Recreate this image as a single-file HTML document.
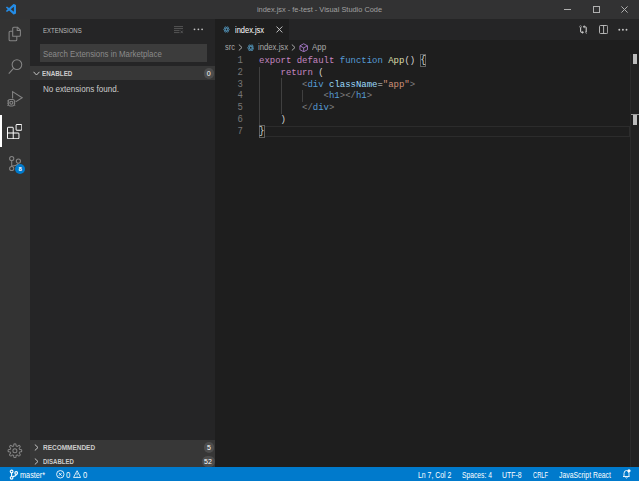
<!DOCTYPE html>
<html><head><meta charset="utf-8">
<style>
*{margin:0;padding:0;box-sizing:border-box}
html,body{width:639px;height:481px;overflow:hidden;background:#1e1e1e;font-family:"Liberation Sans",sans-serif}
.a{position:absolute}
.t{position:absolute;white-space:pre;line-height:1;transform-origin:0 0}
.ln{position:absolute;left:215px;width:28px;text-align:right;transform:scaleY(1.12);transform-origin:0 7px;color:#767676;font-family:"Liberation Mono",monospace;font-size:8.97px;line-height:11.75px}
.code{position:absolute;left:259px;color:#d4d4d4;font-family:"Liberation Mono",monospace;font-size:8.97px;line-height:11.75px;white-space:pre}
.k{color:#c586c0}.b{color:#569cd6}.f{color:#dcdcaa}.g{color:#808080}.at{color:#9cdcfe}.s{color:#ce9178}
.st{position:absolute;top:470.7px;line-height:1;font-size:8.6px;color:#fff;white-space:pre;transform-origin:0 0}
.bd{position:absolute;border-radius:5.5px;background:#4d4d4d;color:#fff;font-size:7px;line-height:11px;text-align:center;height:11px}
</style></head><body>
<!-- title bar -->
<div class="a" style="left:0;top:0;width:639px;height:19px;background:#323233"></div>
<svg class="a" style="left:5.6px;top:4.1px" width="10.5" height="10.5" viewBox="0 0 100 100">
<path fill="#248ce6" fill-rule="evenodd" d="M96.46 10.8L75.86.87a6.23 6.23 0 0 0-7.1 1.2L29.35 38.04 12.17 25a4.160 4.160 0 0 0-5.32.24L1.350 30.250a4.16 4.16 0 0 0 0 6.15L16.25 50 1.35 63.6a4.16 4.16 0 0 0 0 6.15l5.5 5a4.16 4.16 0 0 0 5.32.24l17.18-13.04 39.4 35.96a6.22 6.22 0 0 0 7.1 1.2l20.6-9.92a6.24 6.24 0 0 0 3.54-5.63V16.43a6.24 6.24 0 0 0-3.54-5.63zM75 72.7L45.1 50 75 27.3z"/>
</svg>
<div class="t" style="left:0;top:5.7px;width:639px;text-align:center;font-size:7.4px;color:#a0a0a0">index.jsx - fe-test - Visual Studio Code</div>
<div class="a" style="left:564px;top:9px;width:7px;height:1px;background:#b0b0b0"></div>
<div class="a" style="left:593px;top:6px;width:6.6px;height:6.6px;border:1px solid #b0b0b0"></div>
<svg class="a" style="left:621.2px;top:6px" width="7" height="7" viewBox="0 0 7 7"><path d="M0.4 0.4L6.6 6.6M6.6 0.4L0.4 6.6" stroke="#b0b0b0" stroke-width="1"/></svg>

<!-- activity bar -->
<div class="a" style="left:0;top:19px;width:30px;height:448px;background:#333333"></div>
<svg class="a" style="left:0;top:19px" width="30" height="32" viewBox="0 19 30 32" fill="none" stroke="#858585" stroke-width="1.05" stroke-linejoin="round">
<path d="M12.7 36.2V28.2Q12.7 27.2 13.7 27.2H17.4L20.4 30.2V35.2Q20.4 36.2 19.4 36.2Z"/>
<path d="M17.2 27.4V30.4H20.2"/>
<path d="M12.7 31.3H10.1Q9.1 31.3 9.1 32.3V39.8Q9.1 40.8 10.1 40.8H15.8Q16.8 40.8 16.8 39.8V36.2"/>
</svg>
<svg class="a" style="left:8px;top:59.1px" width="15" height="15.6" viewBox="0 0 24 24" fill="none" stroke="#858585" stroke-width="1.7">
<circle cx="14.3" cy="8.5" r="7.7"/><path d="M9.2 14.2L1.2 23"/>
</svg>
<svg class="a" style="left:0;top:83px" width="30" height="32" viewBox="0 83 30 32" fill="none" stroke="#858585" stroke-width="1.05">
<path d="M12.6 98.4V91.6L22.2 97.8L15.6 101.9"/>
<rect x="8.3" y="99.4" width="6.1" height="6.5" rx="1.6"/>
<circle cx="11.35" cy="102.8" r="1.5" stroke-width="1.1"/>
<path d="M7.2 100.9H8.3M7.2 103.2H8.3M7.2 105.3H8.3M14.4 100.9H15.3M14.4 103.2H15.3M14.4 105.3H15.3" stroke-width="0.9"/>
</svg>
<div class="a" style="left:0;top:115px;width:2px;height:32px;background:#ffffff"></div>
<svg class="a" style="left:7.2px;top:123.7px" width="15.3" height="15.3" viewBox="0 0 24 24">
<path fill="#ffffff" fill-rule="evenodd" d="M13.5 1.5L15 0H22.5L24 1.5V9L22.5 10.5H15L13.5 9V1.5ZM15 1.5V9H22.5V1.5H15ZM0 15V6L1.5 4.5H9L10.5 6V13.5H18L19.5 15V22.5L18 24H1.5L0 22.5V15ZM9 13.5V6H1.5V13.5H9ZM9 15H1.5V22.5H9V15ZM10.5 22.5H18V15H10.5V22.5Z"/>
</svg>
<svg class="a" style="left:0;top:147px" width="30" height="32" viewBox="0 147 30 32" fill="none" stroke="#858585" stroke-width="1.05">
<circle cx="11.7" cy="158.5" r="2.1"/><circle cx="18.4" cy="161.1" r="2.1"/><circle cx="11.7" cy="168.5" r="2.1"/>
<path d="M11.7 160.6V166.4M12 166.1Q17.3 165.6 18.3 163.2"/>
</svg>
<div class="a" style="left:15px;top:164px;width:10px;height:10px;border-radius:50%;background:#007acc"></div>
<div class="t" style="left:15.2px;top:166.1px;width:10px;text-align:center;font-size:6px;font-weight:bold;color:#fff">8</div>
<svg class="a" style="left:7px;top:442.9px" width="15.8" height="15.4" viewBox="0 0 16 16" fill="none" stroke="#858585" stroke-width="1.05">
<path d="M8.00 0.91 L8.28 0.91 L8.56 0.94 L8.83 1.01 L9.07 1.27 L9.18 2.07 L9.23 2.86 L9.37 3.13 L9.55 3.23 L9.73 3.30 L9.92 3.38 L10.10 3.45 L10.28 3.53 L10.47 3.59 L10.76 3.49 L11.36 2.97 L12.01 2.49 L12.36 2.47 L12.60 2.61 L12.81 2.79 L13.02 2.98 L13.21 3.19 L13.39 3.40 L13.53 3.64 L13.51 3.99 L13.03 4.64 L12.51 5.24 L12.41 5.53 L12.47 5.72 L12.55 5.90 L12.62 6.08 L12.70 6.27 L12.77 6.45 L12.87 6.63 L13.14 6.77 L13.93 6.82 L14.73 6.93 L14.99 7.17 L15.06 7.44 L15.09 7.72 L15.09 8.00 L15.09 8.28 L15.06 8.56 L14.99 8.83 L14.73 9.07 L13.93 9.18 L13.14 9.23 L12.87 9.37 L12.77 9.55 L12.70 9.73 L12.62 9.92 L12.55 10.10 L12.47 10.28 L12.41 10.47 L12.51 10.76 L13.03 11.36 L13.51 12.01 L13.53 12.36 L13.39 12.60 L13.21 12.81 L13.02 13.02 L12.81 13.21 L12.60 13.39 L12.36 13.53 L12.01 13.51 L11.36 13.03 L10.76 12.51 L10.47 12.41 L10.28 12.47 L10.10 12.55 L9.92 12.62 L9.73 12.70 L9.55 12.77 L9.37 12.87 L9.23 13.14 L9.18 13.93 L9.07 14.73 L8.83 14.99 L8.56 15.06 L8.28 15.09 L8.00 15.09 L7.72 15.09 L7.44 15.06 L7.17 14.99 L6.93 14.73 L6.82 13.93 L6.77 13.14 L6.63 12.87 L6.45 12.77 L6.27 12.70 L6.08 12.62 L5.90 12.55 L5.72 12.47 L5.53 12.41 L5.24 12.51 L4.64 13.03 L3.99 13.51 L3.64 13.53 L3.40 13.39 L3.19 13.21 L2.98 13.02 L2.79 12.81 L2.61 12.60 L2.47 12.36 L2.49 12.01 L2.97 11.36 L3.49 10.76 L3.59 10.47 L3.53 10.28 L3.45 10.10 L3.38 9.92 L3.30 9.73 L3.23 9.55 L3.13 9.37 L2.86 9.23 L2.07 9.18 L1.27 9.07 L1.01 8.83 L0.94 8.56 L0.91 8.28 L0.91 8.00 L0.91 7.72 L0.94 7.44 L1.01 7.17 L1.27 6.93 L2.07 6.82 L2.86 6.77 L3.13 6.63 L3.23 6.45 L3.30 6.27 L3.38 6.08 L3.45 5.90 L3.53 5.72 L3.59 5.53 L3.49 5.24 L2.97 4.64 L2.49 3.99 L2.47 3.64 L2.61 3.40 L2.79 3.19 L2.98 2.98 L3.19 2.79 L3.40 2.61 L3.64 2.47 L3.99 2.49 L4.64 2.97 L5.24 3.49 L5.53 3.59 L5.72 3.53 L5.90 3.45 L6.08 3.38 L6.27 3.30 L6.45 3.23 L6.63 3.13 L6.77 2.86 L6.82 2.07 L6.93 1.27 L7.17 1.01 L7.44 0.94 L7.72 0.91Z"/>
<circle cx="8" cy="8" r="2.1"/>
</svg>

<!-- side bar -->
<div class="a" style="left:30px;top:19px;width:185px;height:448px;background:#252526"></div>
<div class="t" style="left:42.8px;top:27.4px;font-size:7.5px;color:#bbbbbb;transform:scaleX(0.8)">EXTENSIONS</div>
<svg class="a" style="left:174px;top:25.5px" width="9.5" height="8" viewBox="0 0 9.5 8" fill="none" stroke="#5a5a5a" stroke-width="0.9">
<path d="M0 0.6H9M0 2.6H9M0 4.6H5.5M0 6.6H5.5M6.6 4.6L8.8 7.2M8.8 4.6L6.6 7.2"/>
</svg>
<svg class="a" style="left:190px;top:25px" width="16" height="8" viewBox="190 25 16 8" fill="#c0c0c0"><circle cx="194.5" cy="29.3" r="0.9"/><circle cx="198.4" cy="29.3" r="0.9"/><circle cx="202.1" cy="29.3" r="0.9"/></svg>
<div class="a" style="left:40px;top:44px;width:167px;height:18px;background:#3c3c3c"></div>
<div class="t" style="left:43.4px;top:49.7px;font-size:8.6px;color:#8b8b8b;transform:scaleX(0.914)">Search Extensions in Marketplace</div>

<div class="a" style="left:30px;top:65.8px;width:185px;height:13.8px;background:#373737"></div>
<svg class="a" style="left:33px;top:70.5px" width="7" height="5" viewBox="0 0 7 5" fill="none" stroke="#c5c5c5" stroke-width="1"><path d="M0.5 0.8 L3.5 4 L6.5 0.8"/></svg>
<div class="t" style="left:42.4px;top:70.2px;font-size:7.2px;font-weight:bold;color:#cccccc;transform:scaleX(0.875)">ENABLED</div>
<div class="bd" style="left:203.6px;top:67.6px;width:10.2px">0</div>
<div class="t" style="left:43.4px;top:84.7px;font-size:8.6px;color:#cccccc;transform:scaleX(0.94)">No extensions found.</div>

<div class="a" style="left:30px;top:440px;width:185px;height:27px;background:#373737"></div>
<svg class="a" style="left:33.8px;top:443.8px" width="5" height="7" viewBox="0 0 5 7" fill="none" stroke="#c5c5c5" stroke-width="1"><path d="M0.8 0.5 L4 3.5 L0.8 6.5"/></svg>
<div class="t" style="left:43px;top:444.1px;font-size:7px;font-weight:bold;color:#cccccc;transform:scaleX(0.924)">RECOMMENDED</div>
<div class="bd" style="left:204.2px;top:442.2px;width:9.6px">5</div>
<svg class="a" style="left:33.8px;top:457.8px" width="5" height="7" viewBox="0 0 5 7" fill="none" stroke="#c5c5c5" stroke-width="1"><path d="M0.8 0.5 L4 3.5 L0.8 6.5"/></svg>
<div class="t" style="left:43px;top:458.1px;font-size:7px;font-weight:bold;color:#cccccc;transform:scaleX(0.863)">DISABLED</div>
<div class="bd" style="left:201.5px;top:455.5px;width:13px">52</div>

<!-- editor tabs -->
<div class="a" style="left:215px;top:19px;width:424px;height:21px;background:#252526"></div>
<div class="a" style="left:215px;top:19px;width:74px;height:21px;background:#1e1e1e"></div>
<svg class="a" style="left:223.4px;top:26.2px" width="7" height="7" viewBox="0 0 8 8" fill="none" stroke="#4d87a8" stroke-width="0.9">
<ellipse cx="4" cy="4" rx="3.5" ry="1.4"/><ellipse cx="4" cy="4" rx="3.5" ry="1.4" transform="rotate(60 4 4)"/><ellipse cx="4" cy="4" rx="3.5" ry="1.4" transform="rotate(120 4 4)"/>
</svg>
<div class="t" style="left:235.3px;top:25.7px;font-size:8.6px;color:#ffffff;transform:scaleX(0.87)">index.jsx</div>
<svg class="a" style="left:276px;top:26.3px" width="7" height="6.5" viewBox="0 0 7 6" fill="none" stroke="#c5c5c5" stroke-width="1"><path d="M0.5 0.3L6.3 6.2M6.3 0.3L0.5 6.2"/></svg>
<svg class="a" style="left:578.6px;top:25.4px" width="8.8" height="9" viewBox="0 0 14 16" fill="#c5c5c5">
<path d="M5 12H4c-.27-.02-.48-.11-.69-.31-.21-.2-.3-.42-.31-.69V4.72A1.993 1.993 0 0 0 2 1a1.993 1.993 0 0 0-1 3.72V11c.03.78.34 1.470.94 2.06.6.59 1.28.91 2.06.94h1v2l3-3-3-3v2zM2 1.8c.66 0 1.2.55 1.2 1.2 0 .65-.55 1.2-1.2 1.2C1.34 4.2.8 3.65.8 3c0-.65.55-1.2 1.2-1.2zm11 9.48V5c-.03-.78-.34-1.47-.94-2.06-.6-.59-1.28-.91-2.06-.94H9V0L6 3l3 3V4h1c.27.02.48.11.69.31.21.2.3.42.31.69v6.28A1.993 1.993 0 0 0 12 15a1.993 1.993 0 0 0 1-3.72zm-1 2.92c-.66 0-1.2-.55-1.2-1.2 0-.65.55-1.2 1.2-1.2.66 0 1.2.55 1.2 1.2 0 .65-.55 1.2-1.2 1.2z"/>
</svg>
<svg class="a" style="left:598.7px;top:24.9px" width="9.2" height="9" viewBox="0 0 9.2 9" fill="none" stroke="#c5c5c5" stroke-width="0.9">
<rect x="0.5" y="0.5" width="8.2" height="8" rx="1"/><path d="M4.6 0.5V8.5"/>
</svg>

<svg class="a" style="left:614px;top:25px" width="16" height="8" viewBox="614 25 16 8" fill="#c5c5c5"><circle cx="619.3" cy="29.7" r="0.95"/><circle cx="622.9" cy="29.7" r="0.95"/><circle cx="626.5" cy="29.7" r="0.95"/></svg>
<!-- breadcrumbs -->
<div class="t" style="left:224.6px;top:42.7px;font-size:8.6px;color:#a9a9a9;transform:scaleX(0.86)">src</div>
<svg class="a" style="left:237.7px;top:44.4px" width="5" height="7" viewBox="0 0 5 7" fill="none" stroke="#a9a9a9" stroke-width="1"><path d="M0.8 0.5L4 3.5L0.8 6.5"/></svg>
<svg class="a" style="left:246.8px;top:43.8px" width="7.6" height="7.6" viewBox="0 0 8 8" fill="none" stroke="#4d87a8" stroke-width="0.9">
<ellipse cx="4" cy="4" rx="3.5" ry="1.4"/><ellipse cx="4" cy="4" rx="3.5" ry="1.4" transform="rotate(60 4 4)"/><ellipse cx="4" cy="4" rx="3.5" ry="1.4" transform="rotate(120 4 4)"/>
</svg>
<div class="t" style="left:258.4px;top:42.7px;font-size:8.6px;color:#a9a9a9;transform:scaleX(0.9)">index.jsx</div>
<svg class="a" style="left:291.2px;top:44.4px" width="5" height="7" viewBox="0 0 5 7" fill="none" stroke="#a9a9a9" stroke-width="1"><path d="M0.8 0.5L4 3.5L0.8 6.5"/></svg>
<svg class="a" style="left:298.8px;top:42.8px" width="9.4" height="9.4" viewBox="0 0 10 10" fill="none" stroke="#b180d7" stroke-width="0.9">
<path d="M5 0.8 L9 3 V7.2 L5 9.3 L1 7.2 V3 Z M1 3 L5 5.2 L9 3 M5 5.2 V9.3"/>
</svg>
<div class="t" style="left:312.3px;top:42.7px;font-size:8.6px;color:#a9a9a9;transform:scaleX(0.93)">App</div>

<!-- line numbers -->
<div class="ln" style="top:56px">1</div>
<div class="ln" style="top:68px">2</div>
<div class="ln" style="top:80px">3</div>
<div class="ln" style="top:91px">4</div>
<div class="ln" style="top:103px">5</div>
<div class="ln" style="top:115px">6</div>
<div class="ln" style="top:127px">7</div>

<div class="a" style="left:259px;top:66.5px;width:1px;height:59px;background:#404040"></div>
<div class="a" style="left:280.5px;top:78.3px;width:1px;height:35.4px;background:#404040"></div>
<div class="a" style="left:302px;top:90.1px;width:1px;height:11.8px;background:#404040"></div>
<div class="a" style="left:259px;top:126px;width:371px;height:11px;border:1px solid #2c2c2c"></div>
<div class="a" style="left:420px;top:54px;width:6px;height:13px;border:1px solid #606060;background:#161a16"></div>
<div class="a" style="left:259px;top:125px;width:6px;height:13px;border:1px solid #606060;background:#161a16"></div>

<div class="code" style="top:56px"><span class="k">export</span> <span class="k">default</span> <span class="b">function</span> <span class="f">App</span>() <span style="display:inline-block;transform:translateY(-0.1px) scaleY(1.15)">{</span></div>
<div class="code" style="top:68px">    <span class="k">return</span> (</div>
<div class="code" style="top:80px">        <span class="g">&lt;</span><span class="b">div</span> <span class="at">className</span>=<span class="s">"app"</span><span class="g">&gt;</span></div>
<div class="code" style="top:91px">            <span class="g">&lt;</span><span class="b">h1</span><span class="g">&gt;&lt;/</span><span class="b">h1</span><span class="g">&gt;</span></div>
<div class="code" style="top:103px">        <span class="g">&lt;/</span><span class="b">div</span><span class="g">&gt;</span></div>
<div class="code" style="top:115px">    )</div>
<div class="code" style="top:127px"><span style="display:inline-block;transform:translateY(-0.1px) scaleY(1.15)">}</span></div>

<div class="a" style="left:630px;top:54px;width:9px;height:413px;background:#212121;border-left:1px solid #2a2a2a"></div>
<div class="a" style="left:633px;top:54.3px;width:4px;height:10.2px;background:#bdbdbd"></div>
<div class="a" style="left:633px;top:114px;width:4px;height:11px;background:#bdbdbd"></div>
<div class="a" style="left:631px;top:114px;width:8px;height:1px;background:#9a9a9a"></div>

<!-- status bar -->
<div class="a" style="left:0;top:467px;width:639px;height:14px;background:#007acc"></div>
<svg class="a" style="left:9px;top:469px" width="10" height="11" viewBox="0 0 10 11" fill="none" stroke="#fff" stroke-width="1.1">
<circle cx="2.6" cy="2.5" r="1.35"/><circle cx="7.2" cy="4" r="1.35"/><circle cx="2.6" cy="8.8" r="1.35"/>
<path d="M2.6 3.9V7.4M7.2 5.4Q7.2 6.9 3.6 7.6"/>
</svg>
<div class="st" style="left:20.3px;transform:scaleX(0.849)">master*</div>
<svg class="a" style="left:56px;top:470.2px" width="8.6" height="8.6" viewBox="0 0 9 9" fill="none" stroke="#fff" stroke-width="0.9"><circle cx="4.5" cy="4.5" r="3.9"/><path d="M3 3L6 6M6 3L3 6"/></svg>
<div class="st" style="left:66.4px;transform:scaleX(0.883)">0</div>
<svg class="a" style="left:73px;top:470px" width="8.2" height="8.2" viewBox="0 0 9 9" fill="none" stroke="#fff" stroke-width="0.9"><path d="M4.5 0.8L8.4 8.2H0.6Z M4.5 3.5V5.8 M4.5 6.6V7.3"/></svg>
<div class="st" style="left:83.2px;transform:scaleX(0.883)">0</div>
<div class="st" style="left:417.9px;transform:scaleX(0.804)">Ln 7, Col 2</div>
<div class="st" style="left:462px;transform:scaleX(0.782)">Spaces: 4</div>
<div class="st" style="left:502.4px;transform:scaleX(0.801)">UTF-8</div>
<div class="st" style="left:532.5px;transform:scaleX(0.672)">CRLF</div>
<div class="st" style="left:558.6px;transform:scaleX(0.799)">JavaScript React</div>
<svg class="a" style="left:622px;top:469px" width="9" height="10" viewBox="0 0 9 10" fill="none" stroke="#fff" stroke-width="0.9"><path d="M1 7.5H7.5 M2 7.5V4.5Q2 1.5 4.5 1.5Q7 1.5 7 4.5V7.5 M3.5 8.5Q4.5 9.5 5.5 8.5"/><circle cx="7" cy="1.8" r="1.6" fill="#fff" stroke="none"/></svg>
</body></html>
